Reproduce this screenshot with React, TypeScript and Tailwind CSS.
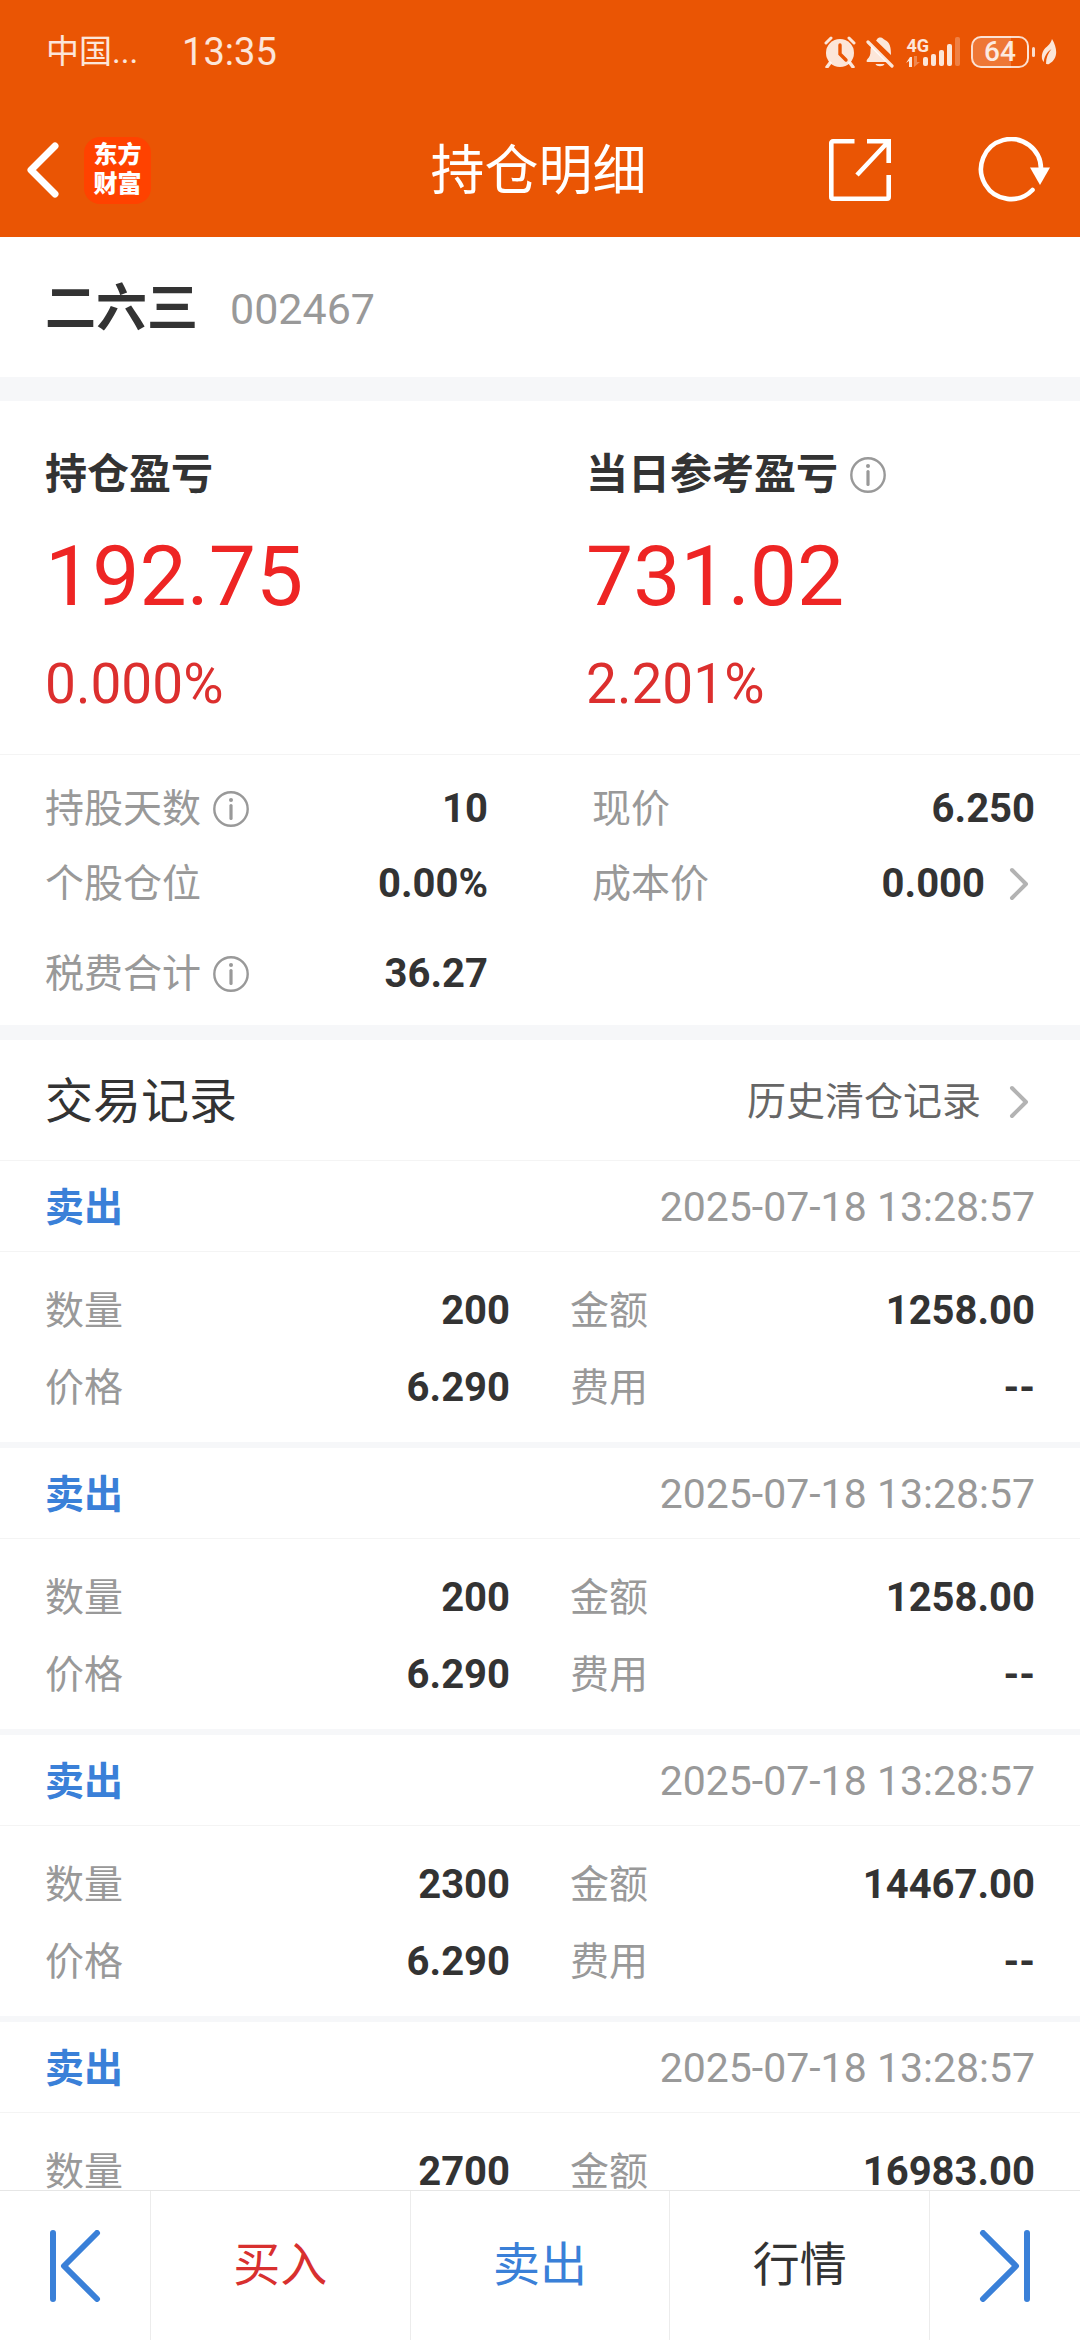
import type { ReactNode } from 'react'

interface TradeRecord {
  id: number
  time: string
  quantity: string
  amount: string
  price?: string
  fee?: string
}

const RECORDS: TradeRecord[] = [
  { id: 1, time: '2025-07-18 13:28:57', quantity: '200', amount: '1258.00', price: '6.290', fee: '--' },
  { id: 2, time: '2025-07-18 13:28:57', quantity: '200', amount: '1258.00', price: '6.290', fee: '--' },
  { id: 3, time: '2025-07-18 13:28:57', quantity: '2300', amount: '14467.00', price: '6.290', fee: '--' },
  { id: 4, time: '2025-07-18 13:28:57', quantity: '2700', amount: '16983.00' },
]

function InfoButton({ label }: { label: string }) {
  return (
    <button aria-label={label} className="shrink-0 text-[#999999]">
      <svg className="h-9 w-9" viewBox="0 0 36 36" fill="none" stroke="currentColor">
        <circle cx="18" cy="18" r="16.7" strokeWidth="2.4" />
        <path d="M18 14.5v13" strokeWidth="3.2" strokeLinecap="round" />
        <circle cx="18" cy="9" r="2" fill="currentColor" stroke="none" />
      </svg>
    </button>
  )
}

function ChevronRight() {
  return (
    <svg className="h-9 w-5 shrink-0" viewBox="0 0 20 36" fill="none" stroke="#b3b3b3" strokeWidth="4" strokeLinecap="round" strokeLinejoin="round">
      <path d="M3 4l14 14L3 32" />
    </svg>
  )
}

function StatusBar() {
  return (
    <div className="flex h-[103px] items-center pl-[46px] pr-[23px] text-white/85">
      <span className="text-[33px] leading-10">中国...</span>
      <span className="ml-11 text-[38px] leading-10">13:35</span>
      <div className="ml-auto flex items-center">
        <svg className="h-8 w-8" viewBox="0 0 32 32" fill="none" stroke="currentColor">
          <circle cx="16" cy="17" r="14" fill="currentColor" stroke="none" />
          <path d="M2 7l5-5M30 7l-5-5" strokeWidth="3" strokeLinecap="round" />
          <path d="M6 27l-3 4M26 27l3 4" strokeWidth="3.4" strokeLinecap="round" />
          <path d="M16 9v9l6 6" stroke="#ea5504" strokeWidth="3.4" strokeLinecap="round" />
        </svg>
        <svg className="ml-2.5 h-8 w-7" viewBox="0 0 28 32" fill="currentColor">
          <path d="M10 4.5c1.200-.6 1.200-3 4-3 3 0 3 1.500 5 2.500 5 2.500 6 7 6 15z" />
          <path d="M5.500 10L21 26H1.500c-1.500 0-1-2 0-3 2-2 3-4 3-8 0-2 .3-3.600 1-5z" />
          <path d="M9.500 28h9c-1 3-8 3-9 0z" />
          <path d="M2 6l24 24" stroke="currentColor" strokeWidth="3.200" strokeLinecap="round" />
        </svg>
        <div className="ml-3 flex h-8 items-end">
          <div className="flex h-8 flex-col">
            <span className="text-[18px] leading-5 font-bold">4G</span>
            <svg className="h-3 w-4" viewBox="0 0 16 12" fill="currentColor">
              <path d="M3 11V5L0 7l4-6h2v10z" />
              <path d="M8 0v11l6-5h-3V0z" opacity=".35" />
            </svg>
          </div>
          <svg className="-ml-1.5 h-8 w-[38px]" viewBox="0 0 38 32" fill="currentColor">
            <rect x="0" y="21" width="5" height="9" rx="2" />
            <rect x="8" y="18" width="5" height="12" rx="2" />
            <rect x="16" y="14" width="5" height="16" rx="2" />
            <rect x="24" y="8" width="5" height="22" rx="2" />
            <rect x="32" y="1" width="5" height="29" rx="2" opacity=".3" />
          </svg>
        </div>
        <div className="ml-2.5 flex h-8 w-[58px] items-center justify-center rounded-[10px] border-2 border-white/80 bg-linear-to-r from-white/20 from-70% to-transparent to-70% text-[28px] leading-7 font-medium">
          64
        </div>
        <span className="ml-[3px] h-2.5 w-[3px] rounded-full bg-white/80" />
        <svg className="ml-1.5 h-7 w-4" viewBox="0 0 16 28" fill="currentColor">
          <path d="M11 1c6 10 6 20-3 25-1 .4-2.500.2-3-.2C5 20 7 15 10.500 11 6 14 3 19 2.800 24 .5 22 0 17 2.500 12.500 5 8.500 9.500 7 11 1z" />
        </svg>
      </div>
    </div>
  )
}

function TitleBar() {
  return (
    <div className="grid h-[134px] grid-cols-[1fr_auto_1fr] items-center pl-[26px] pr-[29px] text-white">
      <div className="flex items-center gap-6">
        <button aria-label="返回">
          <svg className="h-[58px] w-[34px]" viewBox="0 0 34 58" fill="none" stroke="currentColor" strokeWidth="7" strokeLinecap="round" strokeLinejoin="round">
            <path d="M29 5L5 29l24 24" />
          </svg>
        </button>
        <div className="flex h-[67px] w-[67px] flex-col items-center justify-center rounded-2xl bg-[#ff4200] text-[24px] leading-[29px] font-black">
          <span>东方</span>
          <span>财富</span>
        </div>
      </div>
      <h1 className="pt-1 text-[54px] leading-[64px]">持仓明细</h1>
      <div className="flex items-center justify-end gap-[86px]">
        <button aria-label="分享">
          <svg className="h-16 w-16" viewBox="0 0 64 64" fill="none" stroke="currentColor" strokeWidth="4.600">
            <path d="M26.500 3.300H5a1.700 1.700 0 0 0-1.700 1.700v54A1.700 1.700 0 0 0 5 60.700h54a1.700 1.700 0 0 0 1.700-1.700V37" />
            <path d="M39 3.300h21.700V25M60 4L29 37" />
          </svg>
        </button>
        <button aria-label="刷新">
          <svg className="h-[66px] w-[73px]" viewBox="0 0 73 66" fill="none" stroke="currentColor" strokeWidth="4.600">
            <path d="M54.500 53A30 30 0 1 1 63 32" strokeLinecap="round" />
            <path d="M52 30.500h20L62 48z" fill="currentColor" stroke="none" />
          </svg>
        </button>
      </div>
    </div>
  )
}

function Row({ label, value, info, className = '' }: { label: string; value: string; info?: boolean; className?: string }) {
  return (
    <div className={`flex items-center ${className}`}>
      <dt className="flex items-center gap-3 text-[39px] leading-[60px] text-[#999999]">
        {label}
        {info && <InfoButton label={`${label}说明`} />}
      </dt>
      <dd className="ml-auto text-[40px] leading-[60px] font-bold">{value}</dd>
    </div>
  )
}

function Profit({ title, amount, percent, children }: { title: string; amount: string; percent: string; children?: ReactNode }) {
  return (
    <div>
      <h2 className="flex items-center gap-3 text-[42px] leading-[56px] font-bold">
        {title}
        {children}
      </h2>
      <p className="mt-[26px] text-[84px] leading-[96px] text-[#ee2524]">{amount}</p>
      <p className="mt-[27px] text-[55px] leading-[64px] text-[#dc2f2e]">{percent}</p>
    </div>
  )
}

function RecordCard({ record }: { record: TradeRecord }) {
  return (
    <li className="border-b-6 border-[#f6f7f9]">
      <div className="flex h-[91px] items-center justify-between border-b border-[#f4f4f4] px-[45px] pt-1">
        <span className="text-[39px] font-bold text-[#3a80d8]">卖出</span>
        <time className="text-[41px] text-[#999999]">{record.time}</time>
      </div>
      <dl className="grid grid-cols-2 gap-x-[60px] gap-y-[17px] px-[45px] pt-[29px] pb-6">
        <Row label="数量" value={record.quantity} />
        <Row label="金额" value={record.amount} />
        {record.price && <Row label="价格" value={record.price} />}
        {record.fee && <Row label="费用" value={record.fee} />}
      </dl>
    </li>
  )
}

function BottomNav() {
  return (
    <nav className="flex h-[150px] shrink-0 divide-x divide-[#ececec] border-t border-[#e6e6e6] bg-white text-[47px]">
      <button aria-label="上一只" className="flex w-[151px] items-center justify-center text-[#3a80d8]">
        <svg className="h-[72px] w-[52px]" viewBox="0 0 52 72" fill="none" stroke="currentColor" strokeWidth="6" strokeLinecap="round" strokeLinejoin="round">
          <path d="M4 3v66M48 3L15 36l33 33" />
        </svg>
      </button>
      <button className="flex-1 text-[#d8302f]">买入</button>
      <button className="flex-1 text-[#3a80d8]">卖出</button>
      <button className="flex-1">行情</button>
      <button aria-label="下一只" className="flex w-[150px] items-center justify-center text-[#3a80d8]">
        <svg className="h-[72px] w-[52px]" viewBox="0 0 52 72" fill="none" stroke="currentColor" strokeWidth="6" strokeLinecap="round" strokeLinejoin="round">
          <path d="M48 3v66M4 3l33 33L4 69" />
        </svg>
      </button>
    </nav>
  )
}

export default function App() {
  return (
    <div className="flex h-screen flex-col bg-white font-['Roboto','Noto_Sans_CJK_SC',sans-serif] text-[#333333]">
      <header className="shrink-0 bg-[#ea5504]">
        <StatusBar />
        <TitleBar />
      </header>

      <main className="min-h-0 flex-1 overflow-y-auto [scrollbar-width:none]">
        <section className="flex h-[140px] items-center gap-8 px-[45px] pt-1">
          <span className="text-[51px] font-bold">二六三</span>
          <span className="text-[43px] text-[#999999]">002467</span>
        </section>

        <section className="border-t-24 border-[#f6f7f9]">
          <div className="grid grid-cols-2 px-[45px] pt-[46px] pb-[38px]">
            <Profit title="持仓盈亏" amount="192.75" percent="0.000%" />
            <div className="pl-[46px]">
              <Profit title="当日参考盈亏" amount="731.02" percent="2.201%">
                <InfoButton label="当日参考盈亏说明" />
              </Profit>
            </div>
          </div>
          <dl className="grid grid-cols-2 gap-x-[104px] gap-y-[15px] border-t border-[#f4f4f4] px-[45px] pt-6 pb-[21px]">
            <Row label="持股天数" value="10" info />
            <Row label="现价" value="6.250" />
            <Row label="个股仓位" value="0.00%" />
            <div className="flex items-center">
              <dt className="text-[39px] leading-[60px] text-[#999999]">成本价</dt>
              <dd className="ml-auto">
                <button className="flex items-center gap-6 pr-1.5 text-[40px] leading-[60px] font-bold">
                  0.000
                  <ChevronRight />
                </button>
              </dd>
            </div>
            <Row label="税费合计" value="36.27" info className="mt-[15px]" />
          </dl>
        </section>

        <section className="border-t-15 border-[#f6f7f9]">
          <div className="flex h-[121px] items-center justify-between border-b border-[#f4f4f4] pt-1 pr-[51px] pl-[45px]">
            <h2 className="text-[48px]">交易记录</h2>
            <a href="#history" className="flex items-center gap-7 text-[39px] text-[#666666]">
              历史清仓记录
              <ChevronRight />
            </a>
          </div>
          <ul>
            {RECORDS.map((record) => (
              <RecordCard key={record.id} record={record} />
            ))}
          </ul>
        </section>
      </main>

      <BottomNav />
    </div>
  )
}
